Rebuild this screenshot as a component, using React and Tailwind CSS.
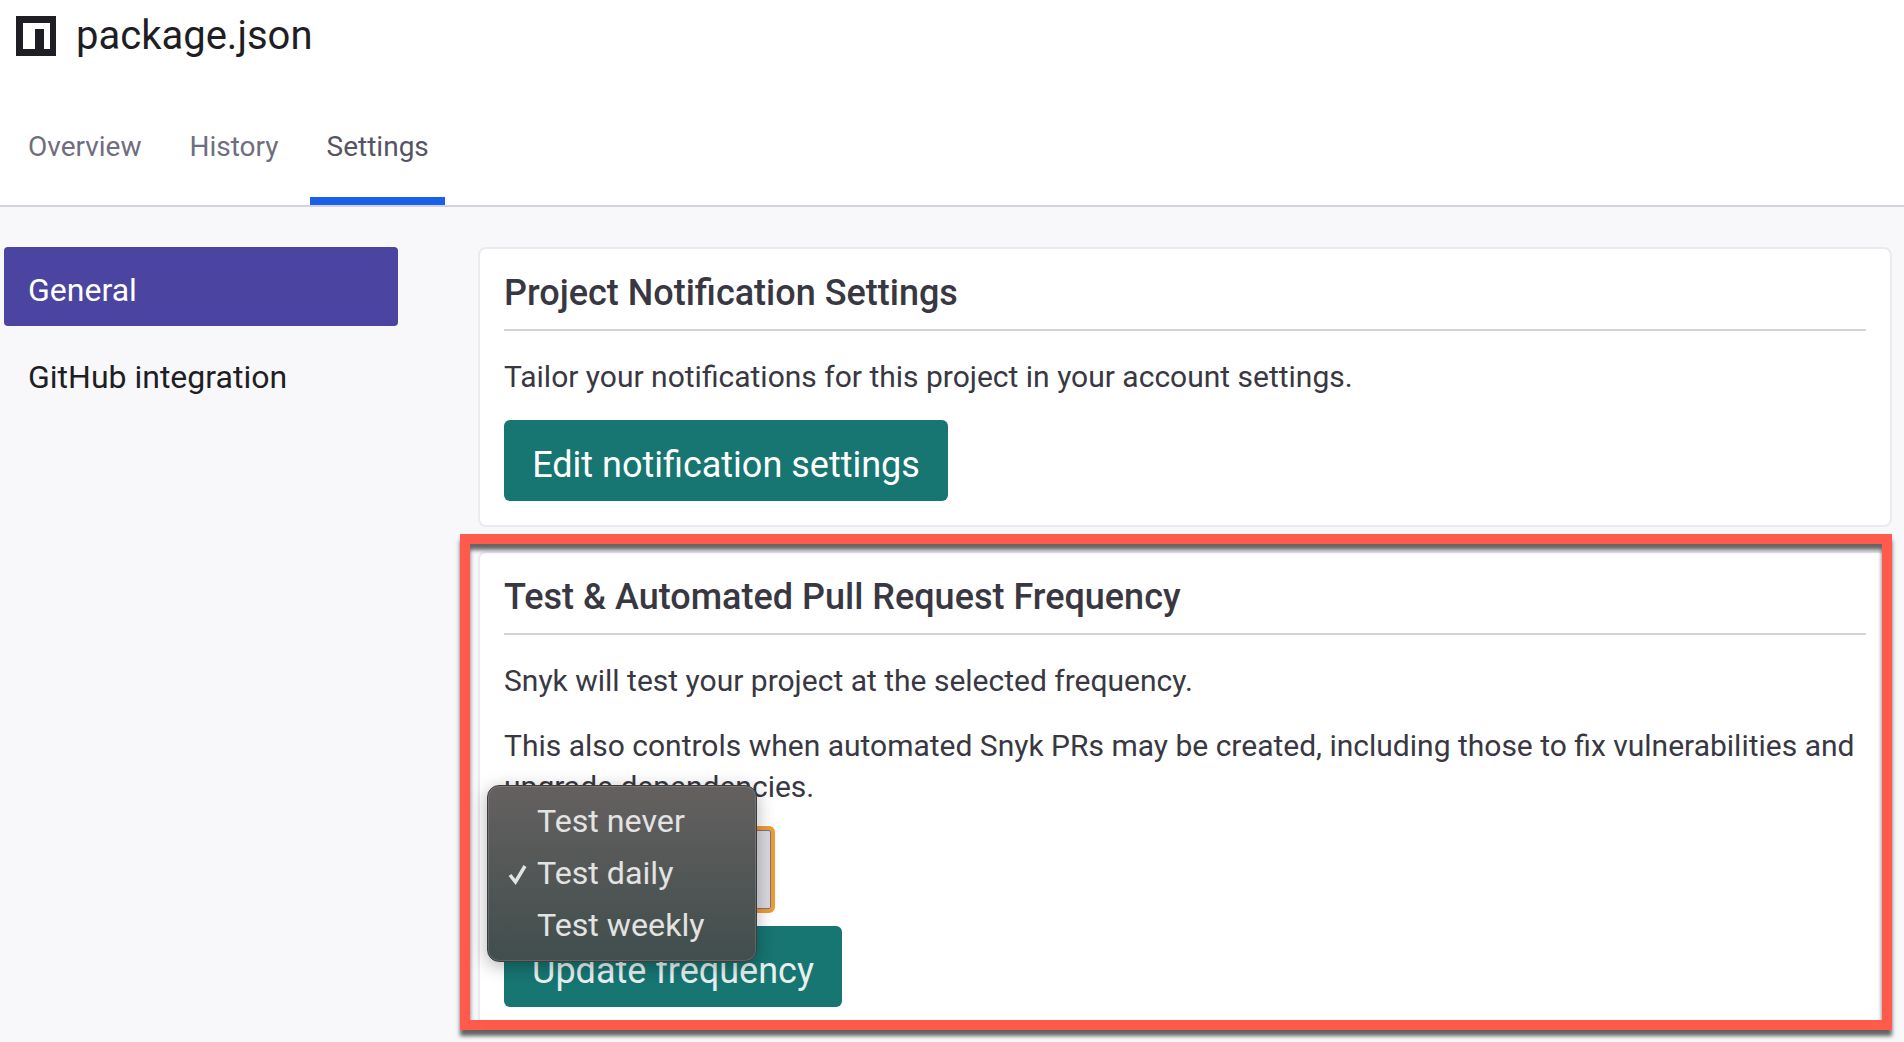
export default function App() {
  return (
    <div className="relative h-[1042px] w-[1904px] overflow-hidden bg-[#f8f8fb] font-['Roboto',sans-serif] text-[#393842]">
      <header className="h-[207px] border-b-2 border-[#d3d3d9] bg-white">
        <div className="flex h-[75px] items-start pl-4 pt-4">
          <svg width="40" height="40" viewBox="0 0 40 40" className="shrink-0">
            <rect width="40" height="40" fill="#1e1e24" />
            <path d="M7 7H34V33H28V13H19V33H7Z" fill="#fff" />
          </svg>
          <h1 className="ml-[20px] text-[40px] leading-[40px] text-[#1e1e24]">package.json</h1>
        </div>
        <nav className="mt-[40px] flex pl-[11px] text-[28px] leading-[32px]">
          <a className="h-[90px] px-[17px] pt-[16px] text-[#6f6e80]">Overview</a>
          <a className="ml-[14px] h-[90px] px-[17px] pt-[16px] text-[#6f6e80]">History</a>
          <a className="ml-[14px] h-[90px] border-b-[8px] border-[#1660ea] pl-[17px] pr-[16px] pt-[16px] text-[#555463]">Settings</a>
        </nav>
      </header>
      <main className="flex pl-1 pt-[40px]">
        <aside className="w-[394px] shrink-0 text-[32px] leading-[36px]">
          <div className="flex h-[79px] items-center rounded-[4px] bg-[#4b45a1] pl-[24px] pt-[6px] text-white">General</div>
          <div className="pl-[24px] pt-[33px] text-[#1e1e24]">GitHub integration</div>
        </aside>
        <div className="ml-[80px] flex w-[1414px] flex-col gap-[24px]">
          <section className="h-[280px] rounded-[8px] border-2 border-[#e8ebf0] bg-white px-[24px] pt-[23px]">
            <h2 className="pb-[15px] text-[36px] font-medium leading-[42px]">Project Notification Settings</h2>
            <div className="h-[2px] w-[1362px] bg-[#d3d3d9]" />
            <p className="pt-[26px] text-[30px] leading-[40px]">Tailor your notifications for this project in your account settings.</p>
            <button className="mt-[23px] h-[81px] w-[444px] rounded-[6px] bg-[#177572] pt-[9px] text-[36px] text-white">Edit notification settings</button>
          </section>
          <section className="relative h-[480px] rounded-[8px] border-2 border-[#e8ebf0] bg-white px-[24px] pt-[23px]">
            <h2 className="pb-[15px] text-[36px] font-medium leading-[42px]">Test &amp; Automated Pull Request Frequency</h2>
            <div className="h-[2px] w-[1362px] bg-[#d3d3d9]" />
            <p className="pt-[26px] text-[30px] leading-[40px]">Snyk will test your project at the selected frequency.</p>
            <p className="pt-[24px] text-[30px] leading-[41px]">This also controls when automated Snyk PRs may be created, including those to fix vulnerabilities and upgrade dependencies.</p>
            <div className="mt-[19px] h-[87px] w-[271px] rounded-[6px] border-[4px] border-[#ef9b35] bg-[#d9d9de] outline outline-1 -outline-offset-[5px] outline-[#77758a]" />
            <button className="mt-[13px] h-[81px] w-[338px] rounded-[6px] bg-[#177572] pt-[8px] text-[36px] text-[#e8f0ef]">Update frequency</button>
          </section>
        </div>
      </main>
      <div className="absolute left-[460px] top-[534px] h-[496px] w-[1432px] border-[10px] border-[#ff5a4c] shadow-[0_6px_4px_rgba(0,0,0,0.6),inset_0_6px_4px_rgba(0,0,0,0.6)]" />
      <ul className="absolute left-[487px] top-[785px] h-[177px] w-[270px] rounded-[12px] border border-[#3d3d3d] bg-gradient-to-b from-[#656060] to-[#404e4d] py-[8px] text-[32.200px] leading-[52px] text-[#e3e3e3] shadow-[0_4px_18px_rgba(0,0,0,0.3),inset_0_0_0_1px_rgba(255,255,255,0.14)]">
        <li className="pl-[49px] pt-[1px]">Test never</li>
        <li className="relative pl-[49px]">
          <svg className="absolute left-[19px] top-[15px]" width="22" height="24" viewBox="0 0 22 24" fill="none" stroke="#e3e3e3" strokeWidth="3.500">
            <path d="M3 13L8.500 20L18 4" />
          </svg>
          Test daily
        </li>
        <li className="pl-[49px]">Test weekly</li>
      </ul>
    </div>
  );
}
